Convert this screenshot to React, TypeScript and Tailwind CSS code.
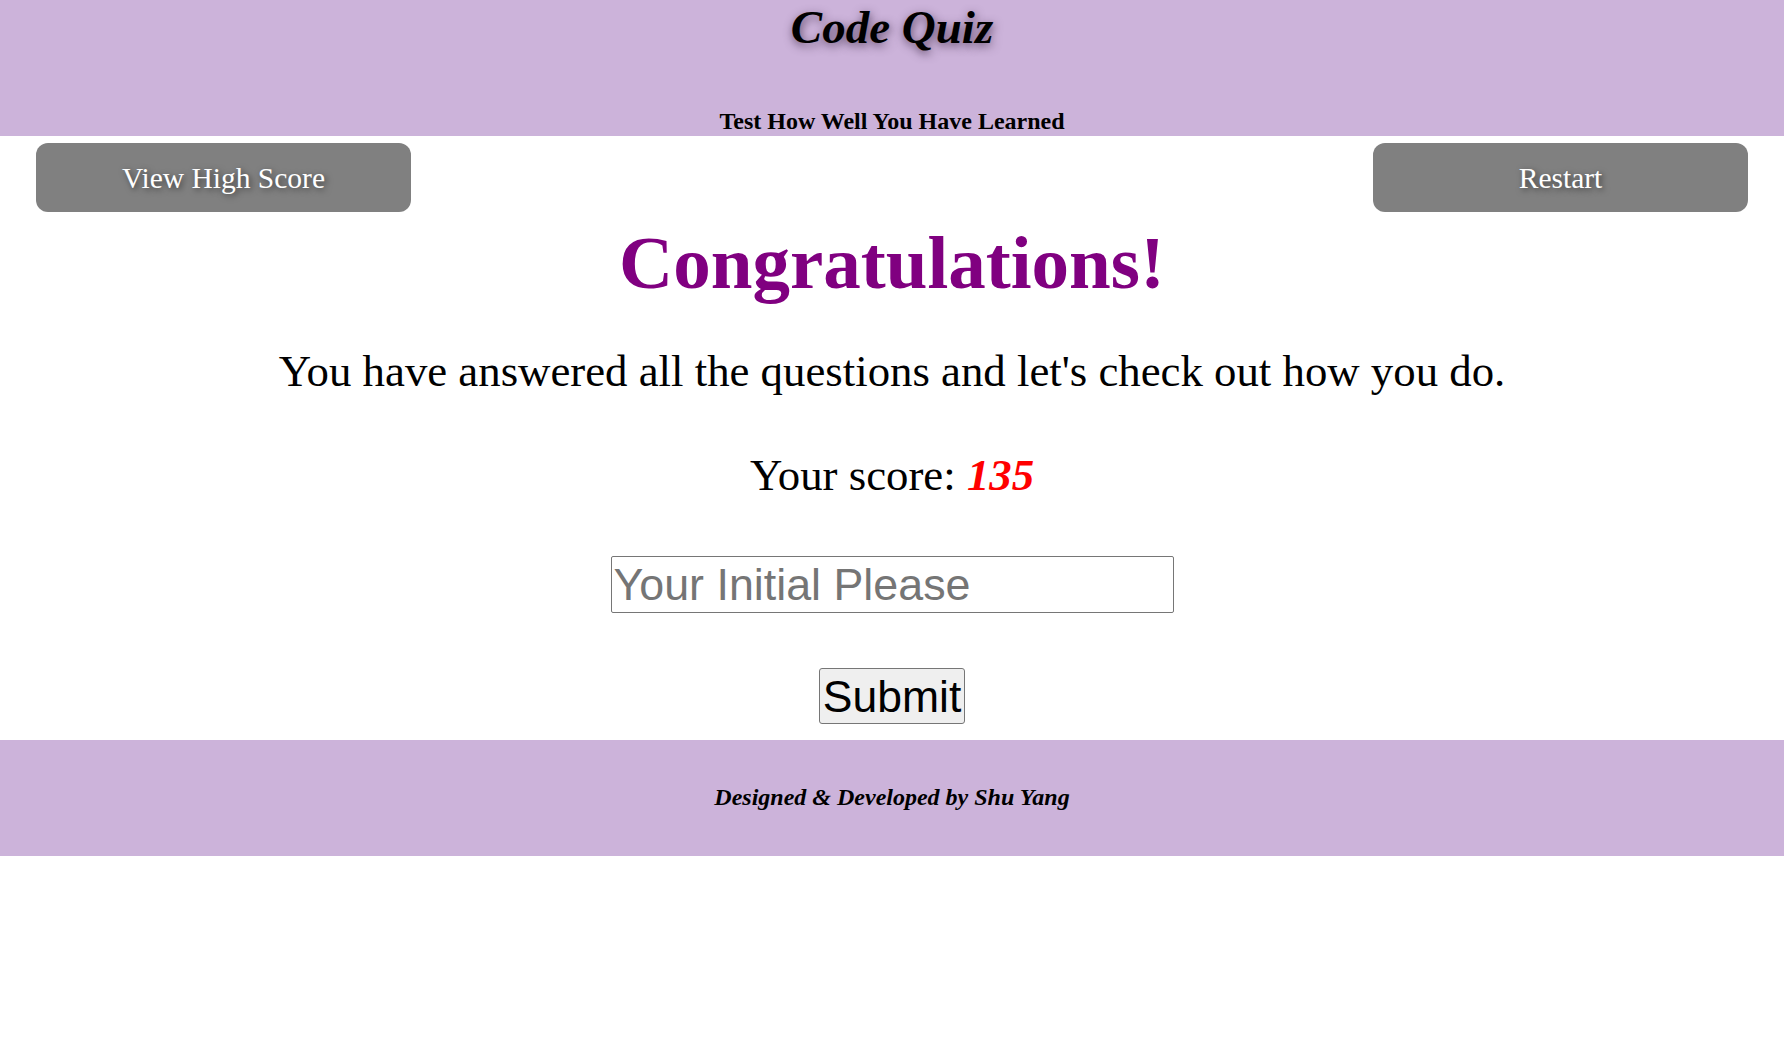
import React from "react";

export default function App() {
  return (
    <div className="w-full bg-white text-black font-['Liberation_Serif','Times_New_Roman',serif]">
      <header className="h-[136px] bg-[#ccb3da] flex flex-col items-center">
        <h1 className="h-[54px] leading-[54px] text-[47px] font-bold italic [text-shadow:1px_3px_10px_rgba(60,40,70,0.75)]">
          Code Quiz
        </h1>
        <h4 className="mt-[53px] leading-[28px] text-[24px] font-bold">
          Test How Well You Have Learned
        </h4>
      </header>

      <div className="mt-[7px] px-[36px] flex justify-between">
        <button className="w-[375px] h-[69px] rounded-[12px] bg-[#808080] text-white text-[29.5px] leading-[34px] [text-shadow:2px_2px_6px_rgba(0,0,0,0.55)] font-['Liberation_Serif',serif]">
          View High Score
        </button>
        <button className="w-[375px] h-[69px] rounded-[12px] bg-[#808080] text-white text-[29.5px] leading-[34px] [text-shadow:2px_2px_6px_rgba(0,0,0,0.55)] font-['Liberation_Serif',serif]">
          Restart
        </button>
      </div>

      <main className="flex flex-col items-center">
        <h2 className="mt-[8px] leading-[86px] text-[75px] font-bold text-[#800080]">
          Congratulations!
        </h2>
        <p className="mt-[39px] leading-[52px] text-[44.8px]">
          You have answered all the questions and let's check out how you do.
        </p>
        <p className="mt-[52px] leading-[52px] text-[44.8px]">
          Your score: <span className="font-bold italic text-[#ff0000]">135</span>
        </p>
        <input
          type="text"
          placeholder="Your Initial Please"
          className="mt-[55px] w-[563px] h-[57px] border border-[#767676] rounded-[2px] px-[2px] text-[44.8px] leading-[51px] font-['Liberation_Sans',Arial,sans-serif] placeholder:text-[#757575] outline-none"
        />
        <button className="mt-[55px] w-[146px] h-[56px] border border-[#767676] rounded-[3px] bg-[#efefef] text-black text-[44.5px] leading-[51px] font-['Liberation_Sans',Arial,sans-serif]">
          Submit
        </button>
      </main>

      <footer className="mt-[16px] h-[116px] bg-[#ccb3da] flex flex-col items-center pt-[43px]">
        <p className="leading-[28px] text-[24px] font-bold italic">
          Designed &amp; Developed by Shu Yang
        </p>
      </footer>
    </div>
  );
}
